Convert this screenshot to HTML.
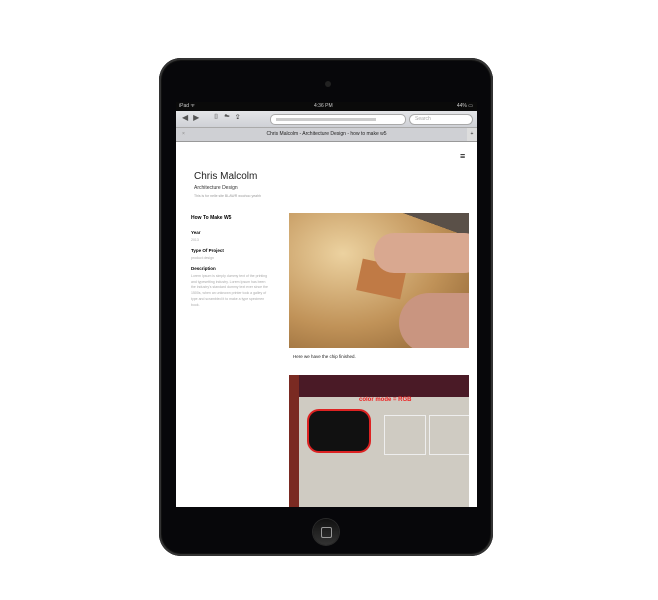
<!DOCTYPE html><html><head><style>
body{margin:0;width:658px;height:600px;background:#fff;position:relative;overflow:hidden;font-family:"Liberation Sans",sans-serif}
.ipad{position:absolute;left:159px;top:58px;width:334px;height:498px;background:#07070a;border-radius:22px;box-shadow:inset 0 0 0 2px #333,inset 0 0 0 3px #111}
.cam{position:absolute;left:325px;top:81px;width:6px;height:6px;border-radius:50%;background:#222}
.home{position:absolute;left:313px;top:519px;width:26px;height:26px;border-radius:50%;background:linear-gradient(#111,#333);box-shadow:0 0 0 1px #2a2a2a}
.home i{position:absolute;left:8px;top:8px;width:9px;height:9px;border:1px solid #999;border-radius:2px}
.scr{position:absolute;left:176px;top:102px;width:301px;height:405px;background:#fff;overflow:hidden}
.sb{height:9px;background:#0a0a0a;color:#ccc;font-size:5px;line-height:9px;position:relative}
.tb{height:16px;background:linear-gradient(#e4e5e8,#cfd1d6);position:relative;border-bottom:1px solid #aaa}
.url{position:absolute;left:94px;top:3px;width:134px;height:9px;background:#fff;border:1px solid #aaa;border-radius:5px}
.url b{position:absolute;left:5px;top:3px;width:100px;height:3px;background:#ccc}
.srch{position:absolute;left:233px;top:3px;width:62px;height:9px;background:#fff;border:1px solid #aaa;border-radius:6px;font-size:5px;color:#aaa;line-height:9px;text-indent:5px}
.tab{height:13px;background:#cfd0d4;font-size:5px;line-height:13px;text-align:center;color:#222;position:relative;border-bottom:1px solid #999}
.a{position:absolute;white-space:nowrap}
.p1{position:absolute;left:113px;top:111px;width:180px;height:135px;background:linear-gradient(200deg,#5a5048 0 12%,transparent 12%),radial-gradient(ellipse at 30% 30%,#ecd2a0,#c09258 55%,#8a5f30);overflow:hidden}
.p2{position:absolute;left:113px;top:273px;width:180px;height:132px;background:linear-gradient(90deg,#7a2a22 0 10px,#cfcbc2 10px);overflow:hidden}
</style></head><body>
<div class="ipad"></div><div class="cam"></div><div class="home"><i></i></div>
<div class="scr">
<div class="sb"><span class="a" style="left:3px">iPad ᯤ</span><span class="a" style="left:138px">4:36 PM</span><span class="a" style="right:4px">44% ▭</span></div>
<div class="tb"><span class="a" style="left:6px;top:2px;font-size:8px;color:#555;letter-spacing:5px">◀▶</span><span class="a" style="left:38px;top:3px;font-size:7px;color:#555;letter-spacing:6px">⌷☁⇪</span><div class="url"><b></b></div><div class="srch">Search</div></div>
<div class="tab"><span class="a" style="left:6px;color:#888">×</span>Chris Malcolm - Architecture Design - how to make w5<span class="a" style="right:0;top:0;width:10px;background:#ddd">+</span></div>
<div class="a" style="left:284px;top:49px;font-size:9px">≡</div>
<div class="a" style="left:18px;top:69px;font-size:10px;color:#222">Chris Malcolm</div>
<div class="a" style="left:18px;top:83px;font-size:5px;color:#333">Architecture Design</div>
<div class="a" style="left:18px;top:92px;font-size:3.5px;color:#999">This is for nelle site BLAWR woohoo yeahh</div>
<div class="a" style="left:15px;top:113px;font-size:5px;font-weight:bold">How To Make W5</div>
<div class="a" style="left:15px;top:128px;font-size:4.5px;font-weight:bold">Year</div>
<div class="a" style="left:15px;top:136px;font-size:3.5px;color:#aaa">2013</div>
<div class="a" style="left:15px;top:146px;font-size:4.5px;font-weight:bold">Type Of Project</div>
<div class="a" style="left:15px;top:154px;font-size:3.5px;color:#aaa">product design</div>
<div class="a" style="left:15px;top:164px;font-size:4.5px;font-weight:bold">Description</div>
<div class="a" style="left:15px;top:172px;font-size:3.5px;color:#aaa;white-space:normal;width:80px;line-height:5.7px">Lorem Ipsum is simply dummy text of the printing and typesetting industry. Lorem Ipsum has been the industry's standard dummy text ever since the 1500s, when an unknown printer took a galley of type and scrambled it to make a type specimen book.</div>
<div class="p1"><div class="a" style="left:70px;top:50px;width:45px;height:32px;background:#c07a45;transform:rotate(12deg)"></div><div class="a" style="left:85px;top:20px;width:110px;height:40px;background:#d9a890;border-radius:20px"></div><div class="a" style="left:110px;top:80px;width:90px;height:60px;background:#c99580;border-radius:30px 0 0 30px"></div></div>
<div class="a" style="left:117px;top:252px;font-size:4.5px;color:#222">Here we have the chip finished.</div>
<div class="p2"><div class="a" style="left:10px;top:0;width:170px;height:22px;background:#4a1a26"></div><div class="a" style="left:18px;top:34px;width:60px;height:40px;background:#111;border:2px solid #d22;border-radius:12px"></div><div class="a" style="left:95px;top:40px;width:40px;height:38px;border:1px solid #eee"></div><div class="a" style="left:140px;top:40px;width:40px;height:38px;border:1px solid #eee"></div><div class="a" style="left:70px;top:22px;font-size:6px;color:#e22;font-weight:bold">color mode = RGB</div></div>
</div>
</body></html>
